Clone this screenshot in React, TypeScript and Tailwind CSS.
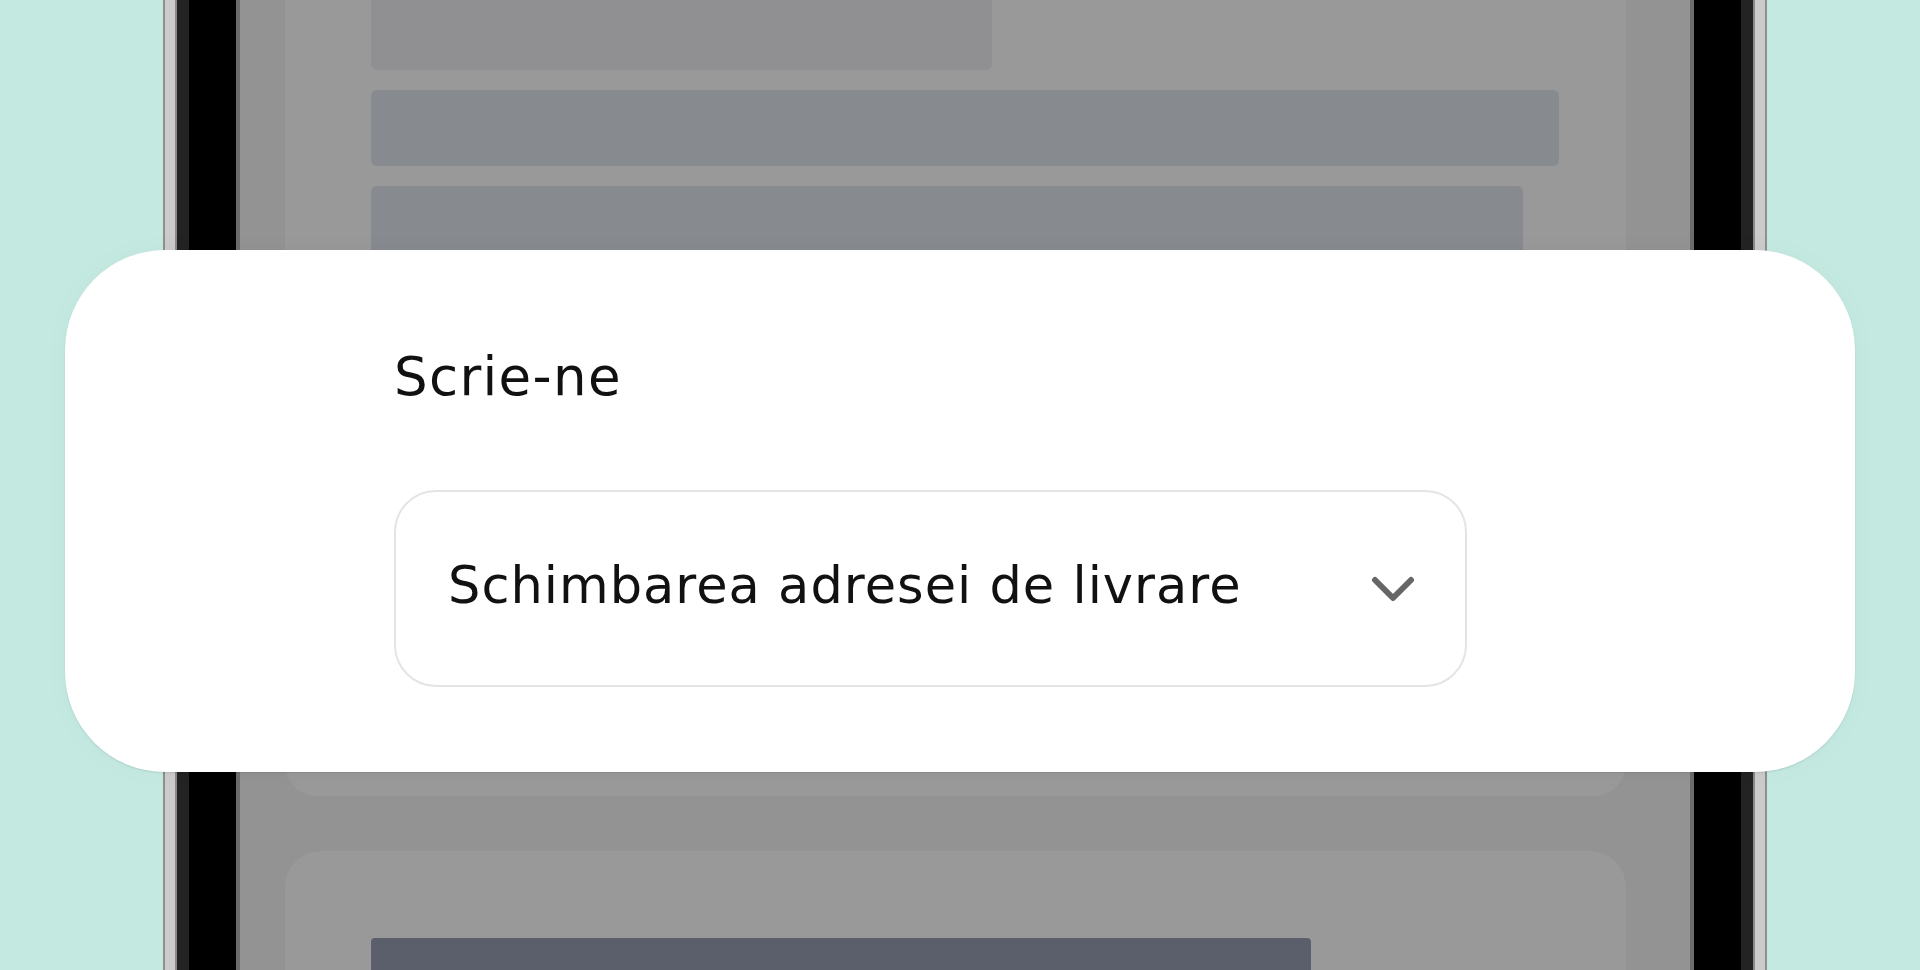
function Chevron() {
  return (
    <svg width="44" height="28" viewBox="0 0 44 28" fill="none" className="mt-[6px]">
      <path
        d="M4 5 L22 23 L40 5"
        stroke="#666666"
        strokeWidth="6"
        strokeLinecap="round"
        strokeLinejoin="round"
      />
    </svg>
  );
}

function PhoneScreen() {
  return (
    <div className="flex h-full flex-1 flex-col bg-[#939393] pl-[45px] pr-[64px]">
      <div className="-mt-[40px] flex h-[836px] shrink-0 flex-col gap-[20px] rounded-b-[32px] bg-[#999999] pl-[86px] pr-[67px]">
        <div className="h-[110px] w-[621px] shrink-0 rounded-b-md bg-[#909092]" />
        <div className="h-[76px] w-full shrink-0 rounded-md bg-[#878a8f]" />
        <div className="h-[76px] w-[1152px] shrink-0 rounded-md bg-[#878a8f]" />
      </div>
      <div className="mt-[55px] flex flex-1 flex-col rounded-t-[36px] bg-[#999999] pl-[86px] pt-[87px]">
        <div className="w-[940px] flex-1 rounded-t-sm bg-[#5a5f6b]" />
      </div>
    </div>
  );
}

export default function App() {
  return (
    <div className="relative h-[970px] w-[1920px] overflow-hidden bg-[#c4e9e1] font-['DejaVu_Sans',sans-serif]">
      {/* phone frame */}
      <div className="ml-[163px] flex h-full w-[1604px] border-x-[2px] border-[#8f8f8f]">
        <div className="flex flex-1 border-x-[10px] border-[#cbcbcb]">
          <div className="flex flex-1 border-x-[2px] border-[#8a8a8a]">
            <div className="flex flex-1 border-x-[12px] border-[#232323]">
              <div className="flex flex-1 border-x-[47px] border-black">
                <div className="flex flex-1 border-x-[4px] border-[#6c6c6c]">
                  <PhoneScreen />
                </div>
              </div>
            </div>
          </div>
        </div>
      </div>

      {/* overlay card */}
      <div className="absolute left-[65px] top-[250px] flex h-[522px] w-[1790px] flex-col rounded-[100px] bg-white pl-[329px] pt-[100px] shadow-[0_1px_2px_rgba(0,0,0,0.1),0_0_30px_rgba(0,0,0,0.025)]">
        <h2 className="text-[53px] leading-[53px] tracking-[0.025em] text-[#111111]">
          Scrie-ne
        </h2>
        <button className="mt-[87px] flex h-[197px] w-[1073px] items-center justify-between rounded-[42px] border-2 border-[#e4e4e4] bg-white pb-[6px] pl-[52px] pr-[50px] text-left">
          <span className="text-[51px] leading-[51px] tracking-[0.02em] text-[#111111]">
            Schimbarea adresei de livrare
          </span>
          <Chevron />
        </button>
      </div>
    </div>
  );
}
